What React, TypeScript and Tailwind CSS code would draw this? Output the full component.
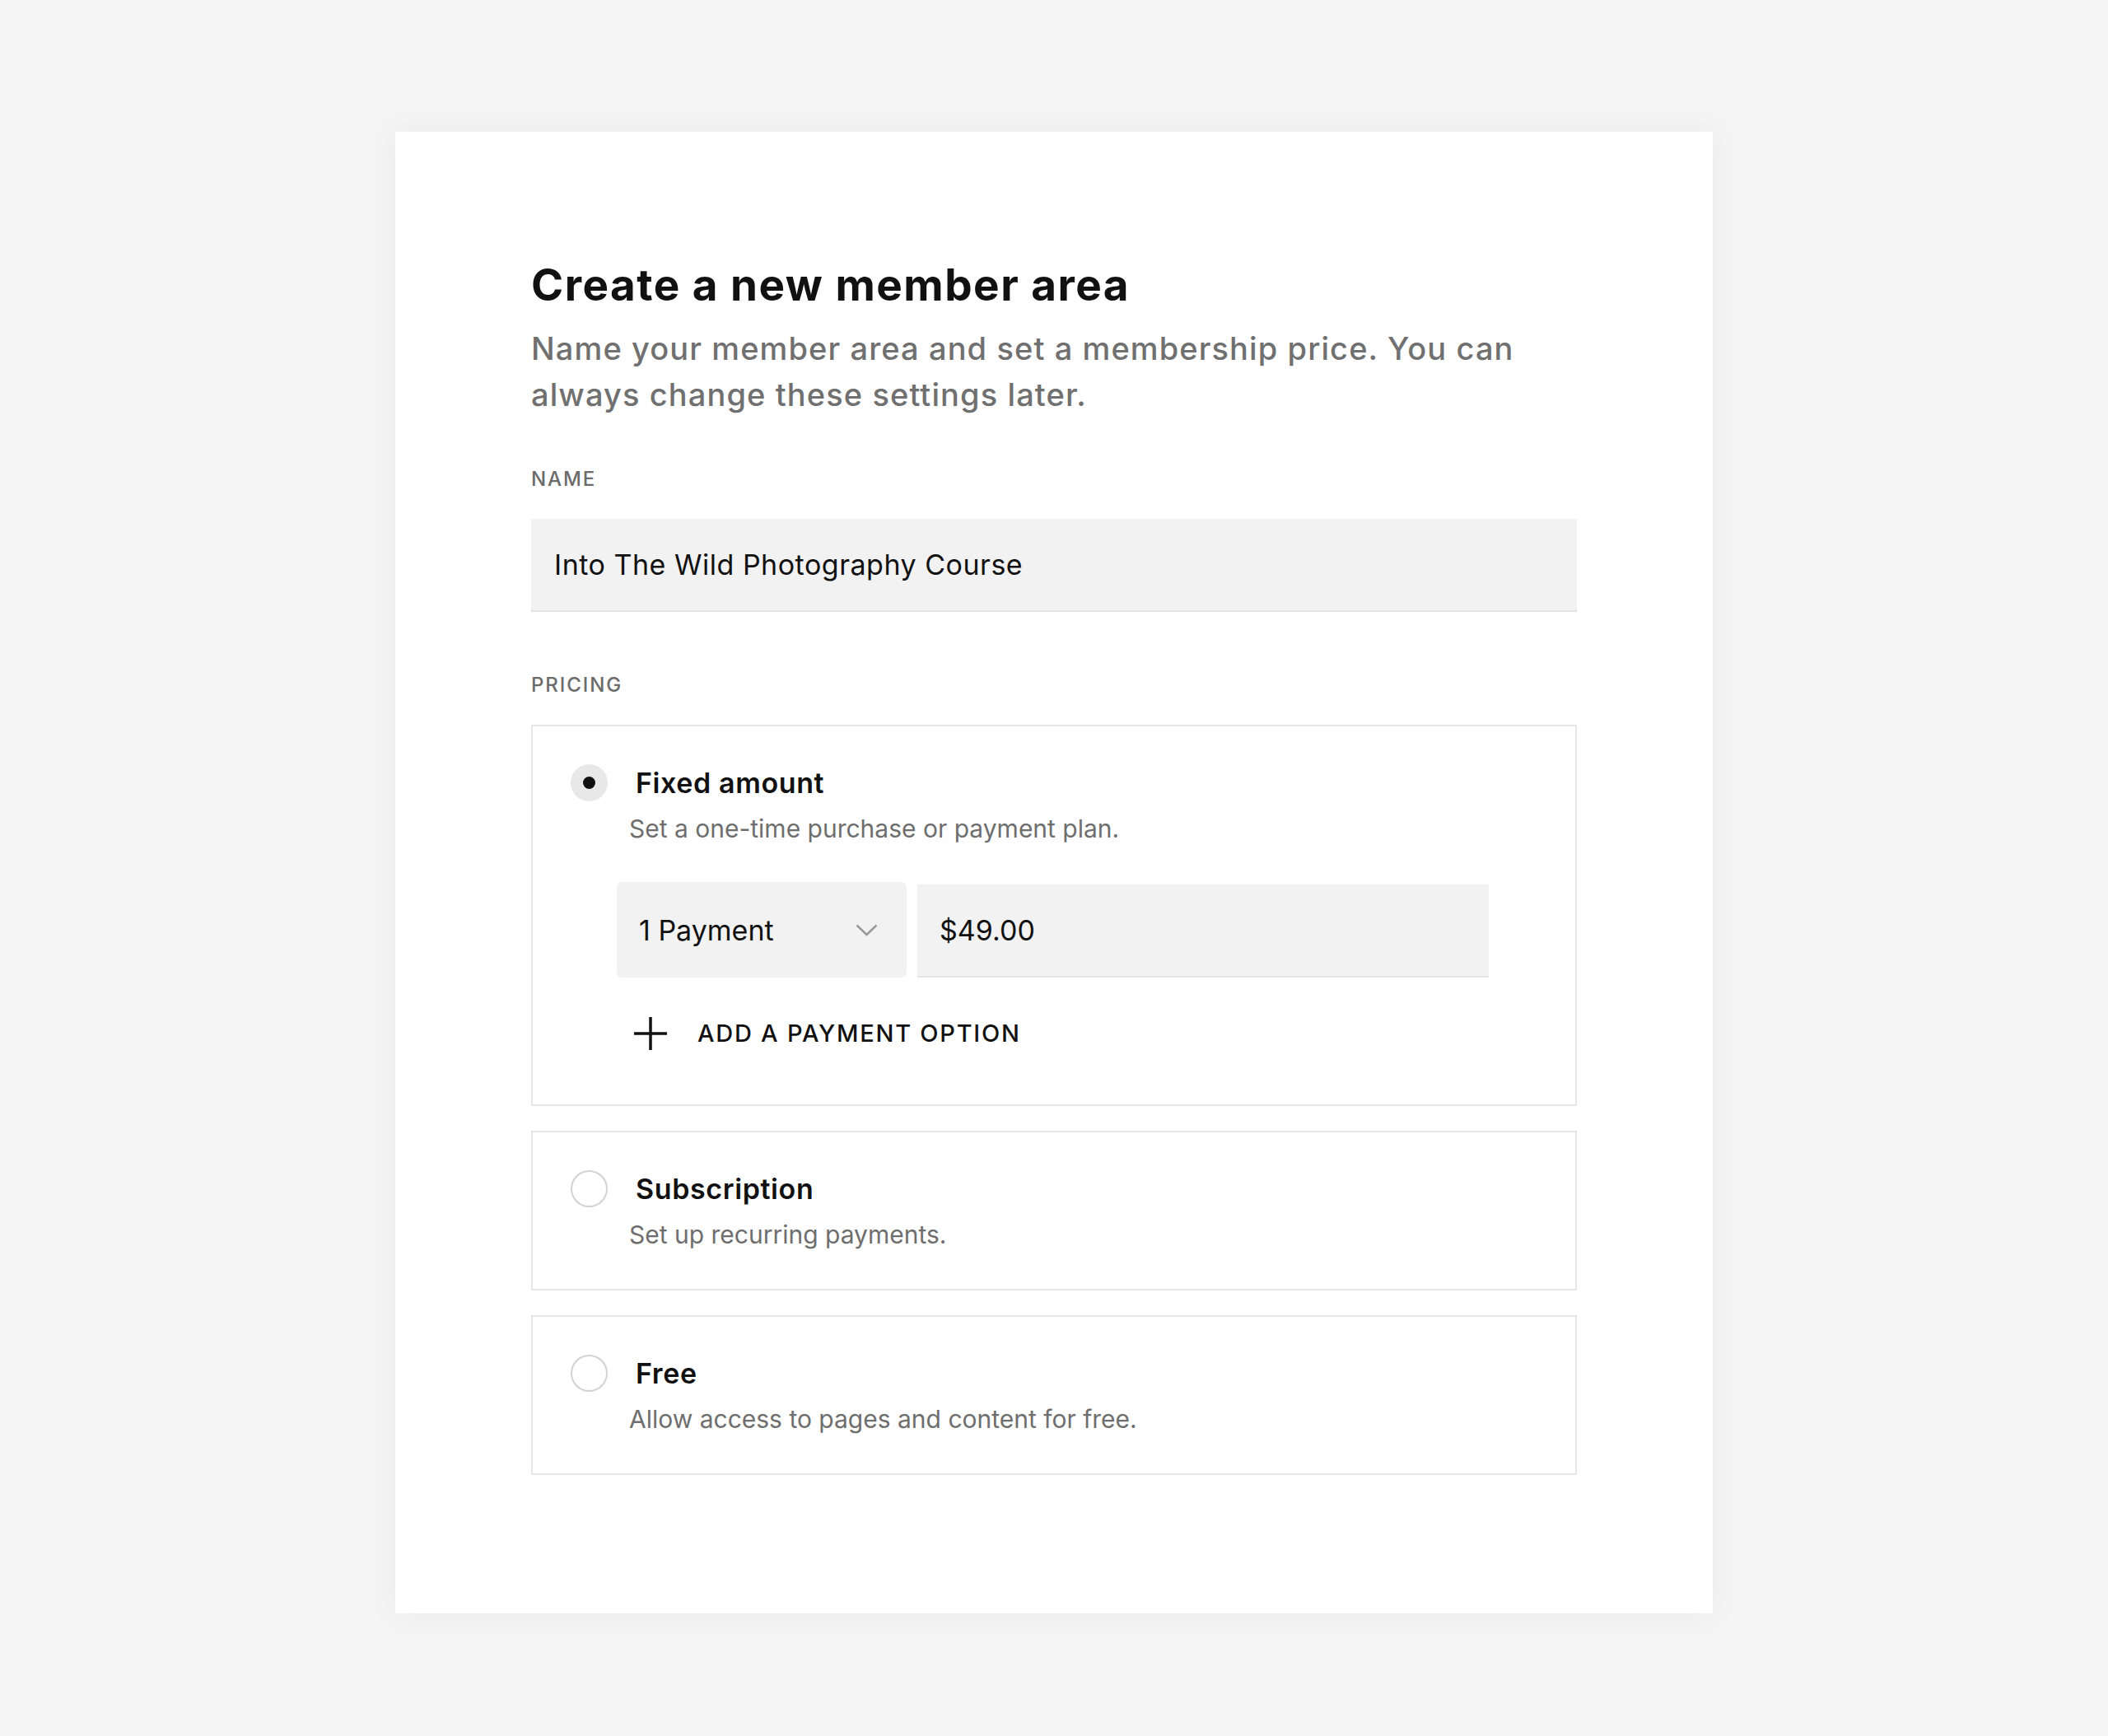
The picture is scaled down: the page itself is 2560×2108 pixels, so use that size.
import React from "react";

type Option = {
  title: string;
  description: string;
  selected?: boolean;
};

const options: Option[] = [
  { title: "Subscription", description: "Set up recurring payments." },
  { title: "Free", description: "Allow access to pages and content for free." },
];

function Radio({ selected }: { selected?: boolean }) {
  if (selected) {
    return (
      <span className="flex h-[45px] w-[45px] shrink-0 items-center justify-center rounded-full bg-[#e8e8e8]">
        <span className="h-[15px] w-[15px] rounded-full bg-[#111111]" />
      </span>
    );
  }
  return <span className="h-[45px] w-[45px] shrink-0 rounded-full border-2 border-[#d2d2d2] bg-white" />;
}

function OptionHeader({ title, selected }: { title: string; selected?: boolean }) {
  return (
    <div className="flex items-center gap-[34px]">
      <Radio selected={selected} />
      <span className="text-[34px] font-semibold leading-[45px] tracking-[0.018em] text-[#111111]">{title}</span>
    </div>
  );
}

function OptionDescription({ children }: { children: React.ReactNode }) {
  return <p className="ml-[71px] mt-[13px] text-[30px] leading-[40px] text-[#6e6e6e]">{children}</p>;
}

export default function App() {
  return (
    <div className="min-h-[2108px] bg-[#f5f5f5] pt-[160px] font-['Inter','Noto_Sans',sans-serif]">
      <div className="mx-auto w-[1600px] bg-white px-[165px] pb-[168px] pt-[155px] shadow-[0_0_40px_rgba(0,0,0,0.05)]">
        {/* Heading */}
        <h1 className="text-[53px] font-bold leading-[62px] tracking-[0.028em] text-[#111111]">
          Create a new member area
        </h1>
        <p className="mt-[18px] w-[1240px] text-[38px] font-medium leading-[56px] tracking-[0.029em] text-[#707070]">
          Name your member area and set a membership price. You can always change these settings later.
        </p>

        {/* Name */}
        <div className="mt-[59px] text-[24px] font-medium uppercase leading-[32px] tracking-[0.08em] text-[#6b6b6b]">
          Name
        </div>
        <div className="mt-[32px] flex h-[113px] items-center border-b-2 border-[#e2e2e2] bg-[#f2f2f2] pl-[28px] text-[34px] leading-[40px] tracking-[0.015em] text-[#111111]">
          Into The Wild Photography Course
        </div>

        {/* Pricing */}
        <div className="mt-[73px] text-[24px] font-medium uppercase leading-[32px] tracking-[0.08em] text-[#6b6b6b]">
          Pricing
        </div>

        <div className="mt-[32px] flex flex-col gap-[30px]">
          {/* Fixed amount, selected */}
          <div className="border-2 border-[#e6e6e6] pb-[66px] pl-[46px] pt-[46px]">
            <OptionHeader title="Fixed amount" selected />
            <OptionDescription>Set a one-time purchase or payment plan.</OptionDescription>

            <div className="ml-[56px] mt-[45px] flex items-end gap-[13px]">
              <div className="flex h-[116px] w-[352px] items-center justify-between rounded-[6px] bg-[#f2f2f2] pl-[27px] pr-[35px] text-[34px] text-[#111111]">
                <span>1 Payment</span>
                <svg width="27" height="15" viewBox="0 0 27 15" fill="none">
                  <polyline points="1.5,1.5 13.5,13 25.5,1.5" stroke="#999999" strokeWidth="2.5" />
                </svg>
              </div>
              <div className="flex h-[113px] w-[694px] items-center border-b-2 border-[#e4e4e4] bg-[#f2f2f2] pl-[27px] text-[34px] text-[#111111]">
                $49.00
              </div>
            </div>

            <button className="ml-[76px] mt-[48px] flex h-[40px] items-center gap-[36px] text-[29px] font-medium tracking-[0.06em] text-[#111111]">
              <svg width="42" height="42" viewBox="0 0 42 42" fill="none">
                <line x1="21" y1="1" x2="21" y2="41" stroke="#111111" strokeWidth="3.5" />
                <line x1="1" y1="21" x2="41" y2="21" stroke="#111111" strokeWidth="3.5" />
              </svg>
              ADD A PAYMENT OPTION
            </button>
          </div>

          {options.map((opt) => (
            <div key={opt.title} className="border-2 border-[#e6e6e6] pb-[46px] pl-[46px] pt-[46px]">
              <OptionHeader title={opt.title} />
              <OptionDescription>{opt.description}</OptionDescription>
            </div>
          ))}
        </div>
      </div>
    </div>
  );
}
